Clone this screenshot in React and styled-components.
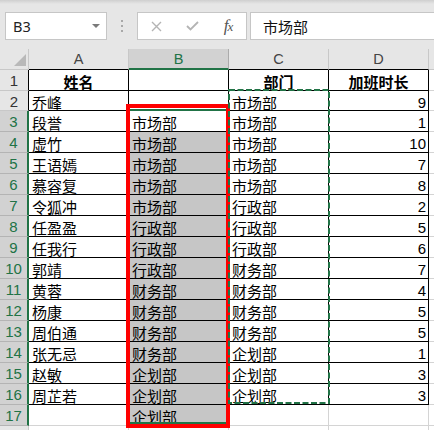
import React from 'react';
import styled, { createGlobalStyle } from 'styled-components';

const Global = createGlobalStyle`
  html, body { margin: 0; padding: 0; background: #ffffff; overflow: hidden; }
  #root { width: 434px; height: 430px; }
`;

const GREEN = '#217346';
const GRID = '#d4d4d4';
const HEAD_BG = '#e6e6e6';
const HEAD_SEL = '#d2d2d2';
const HEAD_LINE = '#c8c8c8';

const Page = styled.div`
  position: relative;
  width: 434px;
  height: 430px;
  overflow: hidden;
  background: #fff;
  font-family: "Noto Sans CJK SC", "Noto Sans", sans-serif;
`;

const Toolbar = styled.div`
  height: 49px;
  background: ${HEAD_BG};
  display: flex;
  flex-direction: column;
`;

const TopShade = styled.div`
  height: 4px;
  background: linear-gradient(#cfcfcf, ${HEAD_BG});
`;

const BarRow = styled.div`
  flex: 1;
  display: flex;
  align-items: center;
  padding-left: 5px;
  padding-bottom: 1px;
`;

const Field = styled.div`
  box-sizing: border-box;
  height: 28px;
  background: #fff;
  border: 1px solid #c6c6c6;
  display: flex;
  align-items: center;
`;

const NameBox = styled(Field)`
  width: 102px;
  padding-left: 7px;
  padding-right: 6px;
  font-family: "Noto Sans", "Liberation Sans", sans-serif;
  font-size: 14.5px;
  color: #222;
`;

const Caret = styled.span`
  margin-left: auto;
  width: 0;
  height: 0;
  border-left: 4px solid transparent;
  border-right: 4px solid transparent;
  border-top: 4px solid #7a7a7a;
`;

const Grip = styled.div`
  margin-left: 14px;
  margin-right: 14px;
  display: flex;
  flex-direction: column;
  gap: 3px;
  & > span {
    width: 2px;
    height: 2px;
    background: #a8a8a8;
  }
`;

const ButtonsBox = styled(Field)`
  width: 110px;
`;

const IconSlot = styled.div`
  width: 36px;
  height: 100%;
  display: flex;
  align-items: center;
  justify-content: center;
`;

const Fx = styled.span`
  font-family: "Liberation Serif", serif;
  font-style: italic;
  font-size: 17px;
  color: #555;
  letter-spacing: -1px;
  & > small { font-size: 13px; }
`;

const FormulaInput = styled(Field)`
  flex: 1;
  margin-left: 3px;
  padding-left: 12px;
  font-size: 15px;
  color: #111;
  border-right: none;
`;

const Sheet = styled.div`
  display: grid;
  grid-template-columns: 29px 100px 100px 100px 100px 1fr;
  grid-template-rows: 21px 21px 20px repeat(15, 21px) 21px;
`;

const Corner = styled.div`
  box-sizing: border-box;
  background: ${HEAD_BG};
  border-right: 1px solid ${HEAD_LINE};
  border-bottom: 1px solid ${HEAD_LINE};
  display: flex;
  align-items: flex-end;
  justify-content: flex-end;
  padding: 0 2px 3px 0;
`;

const ColHead = styled.div`
  box-sizing: border-box;
  background: ${p => (p.$sel ? HEAD_SEL : HEAD_BG)};
  color: ${p => (p.$sel ? GREEN : '#444')};
  border-right: 1px solid ${p => (p.$sel ? '#ababab' : HEAD_LINE)};
  border-bottom: ${p => (p.$sel ? `2px solid ${GREEN}` : `1px solid ${p.$bottom}`)};
  font-family: "Liberation Sans", Arial, sans-serif;
  font-size: 14.5px;
  display: flex;
  align-items: center;
  justify-content: center;
  padding-top: ${p => (p.$sel ? '1px' : '0')};
`;

const RowHead = styled.div`
  box-sizing: border-box;
  background: ${p => (p.$sel ? HEAD_SEL : HEAD_BG)};
  color: ${p => (p.$sel ? GREEN : '#333')};
  border-right: ${p => (p.$sel ? `2px solid ${GREEN}` : `1px solid ${p.$right}`)};
  border-bottom: 1px solid ${p => (p.$sel ? '#b4b4b4' : HEAD_LINE)};
  font-family: "Liberation Sans", Arial, sans-serif;
  font-size: 15px;
  line-height: 20px;
  text-align: center;
  padding-top: 1px;
`;

const Cell = styled.div`
  box-sizing: border-box;
  background: ${p => p.$fill};
  border-right: 1px solid ${p => p.$r};
  border-bottom: 1px solid ${p => p.$b};
  font-family: ${p => (p.$num ? '"Liberation Sans", Arial, sans-serif' : '"Noto Sans CJK SC", sans-serif')};
  font-size: 15px;
  font-weight: ${p => (p.$bold ? 700 : 400)};
  text-align: ${p => p.$align};
  line-height: 20px;
  padding: 1.5px ${p => (p.$num ? '2px' : '3px')} 0 3px;
  color: #000;
  white-space: nowrap;
  overflow: hidden;
`;

const Selection = styled.div`
  position: absolute;
  left: 128px;
  top: 109px;
  width: 101px;
  height: 315px;
  box-sizing: border-box;
  border: 2px solid ${GREEN};
  pointer-events: none;
`;

const RedFrame = styled.div`
  position: absolute;
  left: 126px;
  top: 104px;
  width: 104px;
  height: 324px;
  box-sizing: border-box;
  border: 4px solid #ff0000;
  pointer-events: none;
`;

const Marquee = styled.svg`
  position: absolute;
  left: 228px;
  top: 89px;
  pointer-events: none;
`;

const rows = [
  ['乔峰', '', '市场部', '9'],
  ['段誉', '市场部', '市场部', '1'],
  ['虚竹', '市场部', '市场部', '10'],
  ['王语嫣', '市场部', '市场部', '7'],
  ['慕容复', '市场部', '市场部', '8'],
  ['令狐冲', '市场部', '行政部', '2'],
  ['任盈盈', '行政部', '行政部', '5'],
  ['任我行', '行政部', '行政部', '6'],
  ['郭靖', '行政部', '财务部', '7'],
  ['黄蓉', '财务部', '财务部', '4'],
  ['杨康', '财务部', '财务部', '5'],
  ['周伯通', '财务部', '财务部', '5'],
  ['张无忌', '财务部', '企划部', '1'],
  ['赵敏', '企划部', '企划部', '3'],
  ['周芷若', '企划部', '企划部', '3'],
  ['', '企划部', '', ''],
  ['', '', '', ''],
];

const allRows = [['姓名', '', '部门', '加班时长'], ...rows];

export default function App() {
  return (
    <Page>
      <Global />
      <Toolbar>
        <TopShade />
        <BarRow>
          <NameBox>
            B3
            <Caret />
          </NameBox>
          <Grip>
            <span />
            <span />
            <span />
          </Grip>
          <ButtonsBox>
            <IconSlot>
              <svg width="11" height="11" viewBox="0 0 11 11">
                <path d="M1 1 L10 10 M10 1 L1 10" stroke="#b4b4b4" strokeWidth="1.4" fill="none" />
              </svg>
            </IconSlot>
            <IconSlot>
              <svg width="13" height="10" viewBox="0 0 13 10">
                <path d="M1 5 L4.5 8.5 L12 1" stroke="#b4b4b4" strokeWidth="1.8" fill="none" />
              </svg>
            </IconSlot>
            <IconSlot>
              <Fx>f<small>x</small></Fx>
            </IconSlot>
          </ButtonsBox>
          <FormulaInput>市场部</FormulaInput>
        </BarRow>
      </Toolbar>

      <Sheet>
        <Corner>
          <svg width="12" height="12" viewBox="0 0 12 12">
            <polygon points="12,0 12,12 0,12" fill="#b9b9b9" />
          </svg>
        </Corner>
        {['A', 'B', 'C', 'D', ''].map((c, i) => (
          <ColHead key={c + i} $sel={c === 'B'} $bottom={c && c !== 'B' ? '#000' : HEAD_LINE}>
            {c}
          </ColHead>
        ))}

        {allRows.map((r, ri) => {
          const n = ri + 1;
          const inTable = n <= 16;
          const selRow = n >= 3 && n <= 17;
          return (
            <React.Fragment key={n}>
              <RowHead $sel={selRow} $right={inTable ? '#000' : HEAD_LINE}>
                {n <= 17 ? n : ''}
              </RowHead>
              {r.map((v, ci) => {
                const isB = ci === 1;
                const fill = isB && n >= 4 && n <= 17 ? '#c6c6c6' : '#fff';
                const border = inTable ? '#000' : GRID;
                const header = n === 1;
                const isNum = ci === 3 && !header;
                return (
                  <Cell
                    key={ci}
                    $fill={fill}
                    $r={border}
                    $b={border}
                    $bold={header}
                    $num={isNum}
                    $align={header ? 'center' : isNum ? 'right' : 'left'}
                  >
                    {v}
                  </Cell>
                );
              })}
              <Cell $fill="#fff" $r={GRID} $b={GRID} $align="left" />
            </React.Fragment>
          );
        })}
      </Sheet>

      <Selection />
      <RedFrame />
      <Marquee width="102" height="316" viewBox="0 0 102 316">
        <rect x="1" y="1" width="100" height="313" fill="none" stroke={GREEN} strokeWidth="2" strokeDasharray="6 2.5" />
      </Marquee>
    </Page>
  );
}
